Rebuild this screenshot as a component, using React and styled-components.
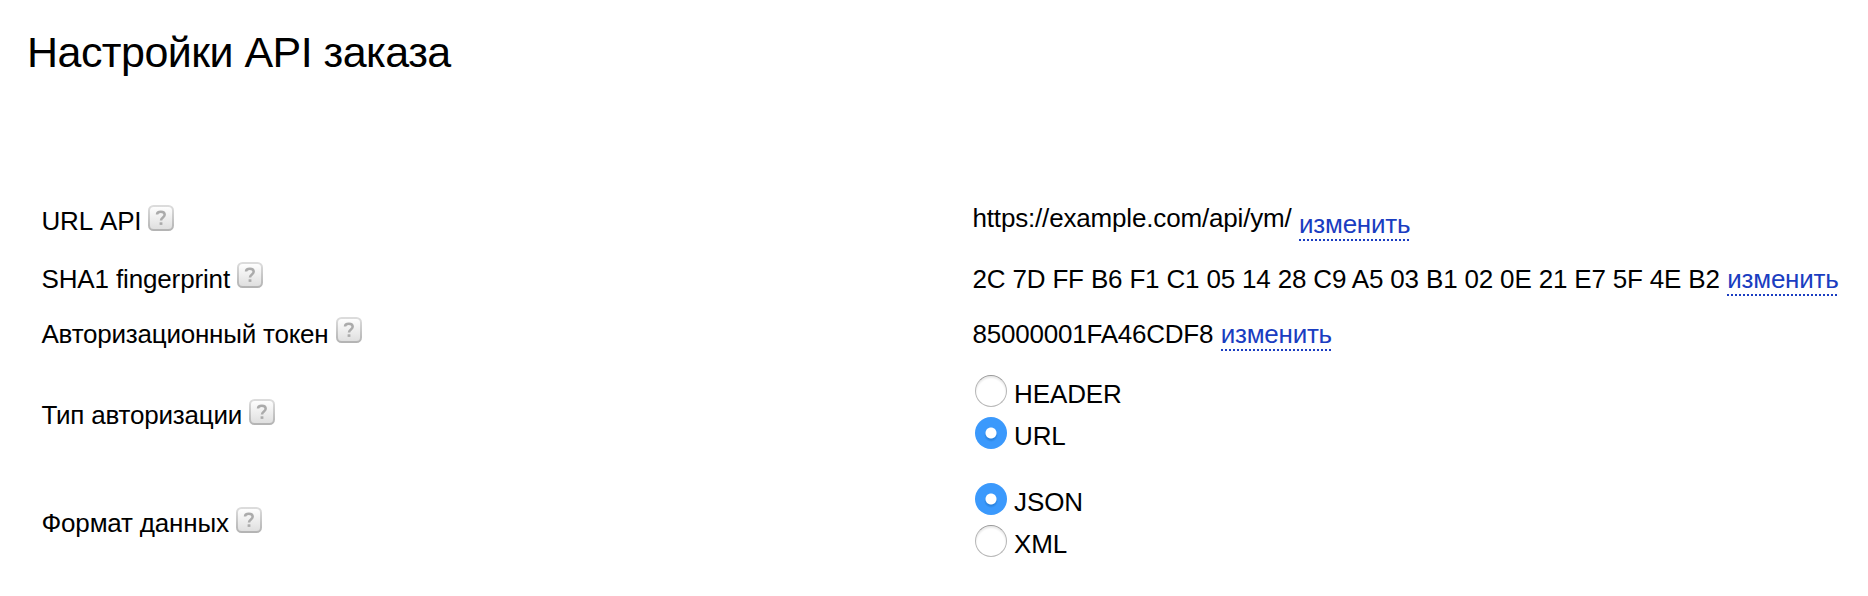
import React, { useState } from "react";
import styled, { createGlobalStyle, css } from "styled-components";

const GlobalStyle = createGlobalStyle`
  body {
    margin: 0;
    background: #fff;
    color: #000;
    font: 26px/30px "Liberation Sans", Arial, sans-serif;
  }
`;

const Page = styled.main`
  box-sizing: border-box;
  width: 1868px;
  height: 596px;
  overflow: hidden;
  padding: 27px 0 0 27px;
`;

const Title = styled.h1`
  margin: 0 0 114px;
  font-size: 43px;
  line-height: 50px;
  font-weight: 400;
  white-space: nowrap;
  letter-spacing: -0.54px;
`;

const Row = styled.div`
  display: grid;
  grid-template-columns: 931px 1fr;
  align-items: center;
  height: ${(p) => p.$height}px;
  padding-left: 14.5px;
  white-space: nowrap;
`;

const Label = styled.div`
  display: flex;
  align-items: flex-start;
  gap: 7px;
  font-kerning: ${(p) => (p.$unkerned ? "none" : "auto")};
  letter-spacing: ${(p) => p.$spacing}px;
`;

const Help = styled.svg`
  display: block;
  flex: none;
  width: 26px;
  height: 26px;
  margin-top: ${(p) => -p.$lift}px;
`;

const Value = styled.div`
  display: flex;
  align-items: ${(p) => (p.$staggered ? "flex-end" : "flex-start")};
  gap: 7.5px;
  margin-bottom: -2px;
`;

const ValueText = styled.span`
  letter-spacing: ${(p) => p.$spacing ?? -0.17}px;
  ${(p) => p.$raised && css`margin-bottom: 8px;`}
`;

const ChangeLink = styled.a`
  height: 30px;
  color: #1a3dc1;
  text-decoration: none;
  letter-spacing: -0.25px;
  cursor: pointer;
  background: repeating-linear-gradient(90deg, #1a3dc1 0 2px, transparent 2px 4px) 0 100% / 110px 2px no-repeat;
  padding-bottom: 2px;
`;

const Options = styled.div`
  display: flex;
  flex-direction: column;
`;

const Option = styled.label`
  display: flex;
  align-items: flex-start;
  gap: 7px;
  box-sizing: border-box;
  height: 42px;
  padding: 2px 0 0 2.5px;
`;

const Radio = styled.input.attrs({ type: "radio" })`
  appearance: none;
  box-sizing: border-box;
  width: 32px;
  height: 32px;
  margin: 0;
  border: 1px solid #b8b8b8;
  border-top-color: #999;
  border-radius: 50%;
  background: #fff;
  box-shadow: inset 0 2px 2px #e9e9e9;

  &:checked {
    border: 0;
    background: radial-gradient(circle at 16px 16px, #fff 5px, transparent 6px),
      radial-gradient(circle at 16px 18px, #277fda 4px, #3b99fc 7px);
    box-shadow: none;
  }
`;

const OptionText = styled.span`
  margin-top: 4px;
  letter-spacing: -0.1px;
`;

function HelpIcon({ lift }) {
  return (
    <Help viewBox="0 0 26 26" aria-label="?" $lift={lift}>
      <defs>
        <linearGradient id="key" x1="0" y1="0" x2="0" y2="1">
          <stop offset="0" stopColor="#fff" />
          <stop offset="1" stopColor="#dedede" />
        </linearGradient>
        <linearGradient id="edge" x1="0" y1="0" x2="0" y2="1">
          <stop offset="0" stopColor="#dcdcdc" />
          <stop offset="1" stopColor="#b4b4b4" />
        </linearGradient>
      </defs>
      <rect x="1" y="1" width="24" height="24" rx="4.5" fill="url(#key)" stroke="url(#edge)" strokeWidth="2" />
      <path d="M9 9.6C9 7.6 10.6 6.8 12.8 6.8s3.9 1 3.9 3c0 2.6-3.7 2.7-3.7 5.6" fill="none" stroke="#ababab" strokeWidth="2.5" />
      <rect x="11.6" y="17.3" width="2.8" height="2.6" fill="#ababab" />
    </Help>
  );
}

function Field({ label, spacing = -0.18, unkerned, lift = 1, height, children }) {
  return (
    <Row $height={height}>
      <Label $spacing={spacing} $unkerned={unkerned}>
        <span>{label}</span>
        <HelpIcon lift={lift} />
      </Label>
      {children}
    </Row>
  );
}

function Choice({ name, items, initial }) {
  const [selected, setSelected] = useState(initial);
  return (
    <Options>
      {items.map((item) => (
        <Option key={item}>
          <Radio name={name} checked={selected === item} onChange={() => setSelected(item)} />
          <OptionText>{item}</OptionText>
        </Option>
      ))}
    </Options>
  );
}

export default function App() {
  return (
    <Page>
      <GlobalStyle />
      <Title>Настройки API заказа</Title>
      <Field label="URL API" spacing={-0.18} unkerned height={60}>
        <Value $staggered>
          <ValueText $raised>https://example.com/api/ym/</ValueText>
          <ChangeLink>изменить</ChangeLink>
        </Value>
      </Field>
      <Field label="SHA1 fingerprint" spacing={-0.14} lift={2} height={56}>
        <Value>
          <ValueText>2C 7D FF B6 F1 C1 05 14 28 C9 A5 03 B1 02 0E 21 E7 5F 4E B2</ValueText>
          <ChangeLink>изменить</ChangeLink>
        </Value>
      </Field>
      <Field label="Авторизационный токен" spacing={-0.22} lift={2} height={54}>
        <Value>
          <ValueText $spacing={-0.22}>85000001FA46CDF8</ValueText>
          <ChangeLink>изменить</ChangeLink>
        </Value>
      </Field>
      <Field label="Тип авторизации" spacing={-0.2} height={108}>
        <Choice name="auth" items={["HEADER", "URL"]} initial="URL" />
      </Field>
      <Field label="Формат данных" height={108}>
        <Choice name="format" items={["JSON", "XML"]} initial="JSON" />
      </Field>
    </Page>
  );
}
